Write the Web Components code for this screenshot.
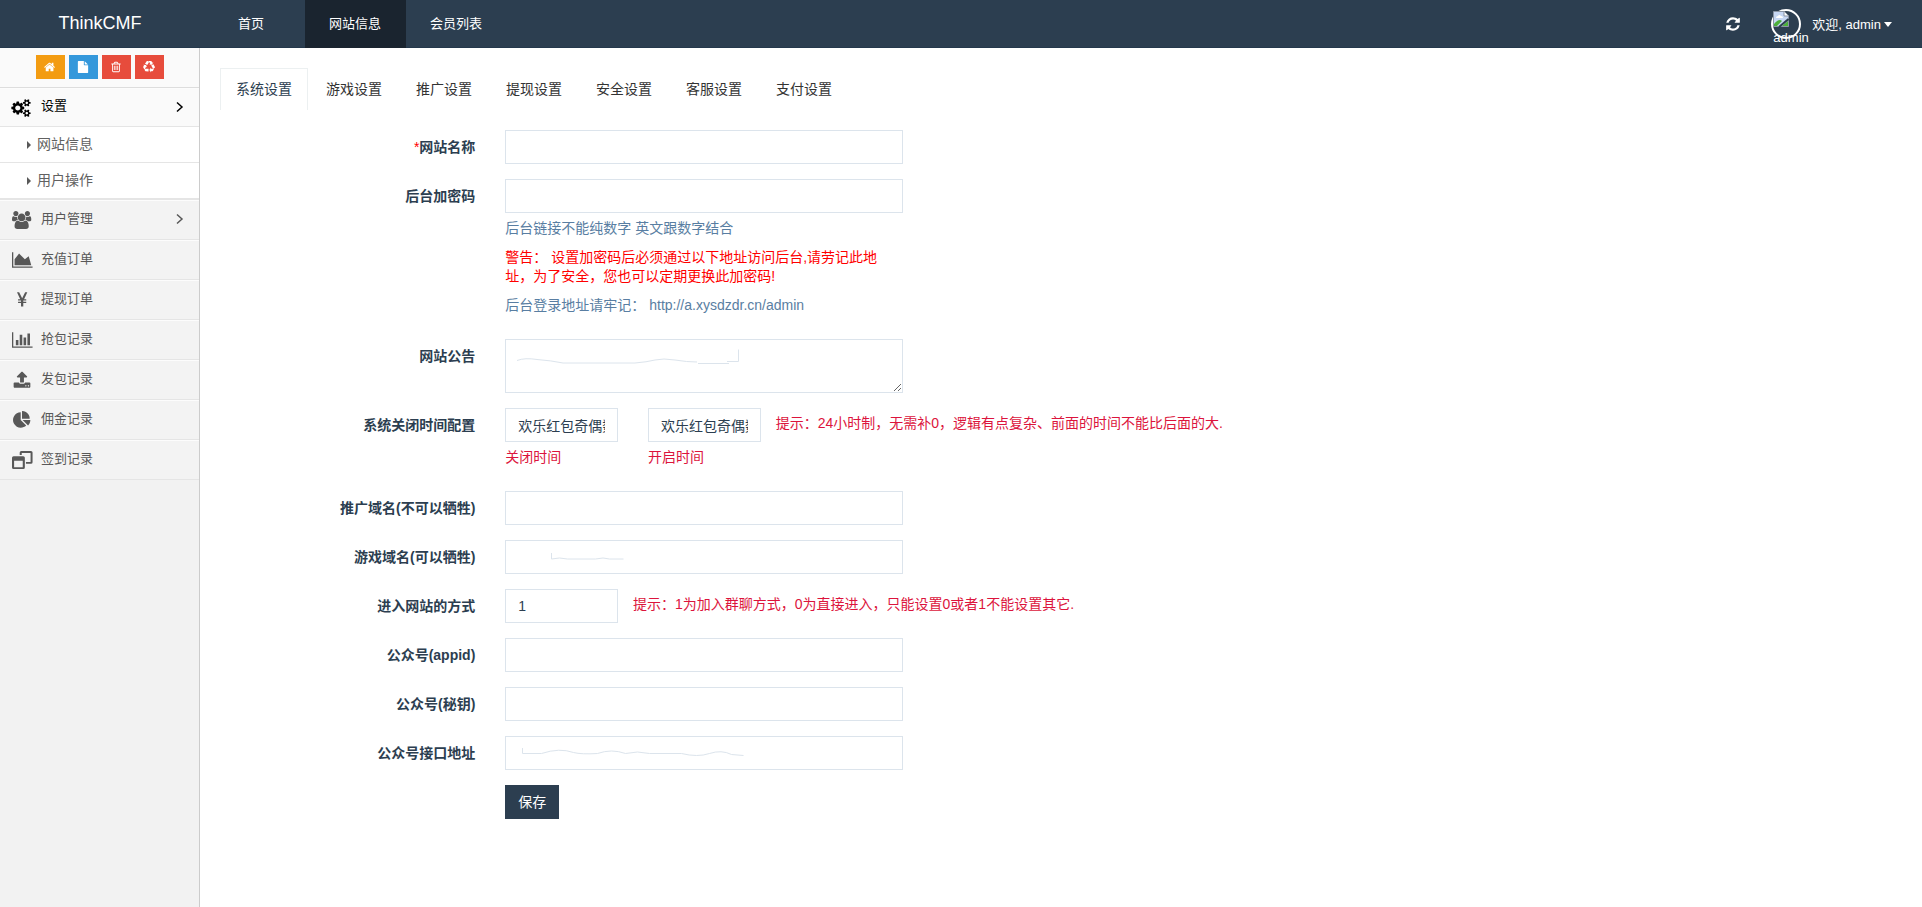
<!DOCTYPE html>
<html lang="zh-CN">
<head>
<meta charset="utf-8">
<meta name="viewport" content="width=device-width, initial-scale=1">
<title>ThinkCMF</title>
<style>
  html { --navy: #2c3e50; --line: #dce4ec; }
  body { margin: 0; background: #fff; color: var(--navy); font: 14px/19px "Liberation Sans", "Noto Sans CJK SC", sans-serif; }
</style>
</head>
<body>
<cmf-app>
  <cmf-header slot="header">
    <cmf-nav-link home>首页</cmf-nav-link>
    <cmf-nav-link active>网站信息</cmf-nav-link>
    <cmf-nav-link>会员列表</cmf-nav-link>
  </cmf-header>
  <cmf-sidebar slot="sidebar">
    <cmf-menu-item icon="cogs" arrow open>设置
      <cmf-submenu-item slot="sub">网站信息</cmf-submenu-item>
      <cmf-submenu-item slot="sub">用户操作</cmf-submenu-item>
    </cmf-menu-item>
    <cmf-menu-item icon="group" arrow>用户管理</cmf-menu-item>
    <cmf-menu-item icon="area">充值订单</cmf-menu-item>
    <cmf-menu-item icon="yen">提现订单</cmf-menu-item>
    <cmf-menu-item icon="bars">抢包记录</cmf-menu-item>
    <cmf-menu-item icon="upload">发包记录</cmf-menu-item>
    <cmf-menu-item icon="pie">佣金记录</cmf-menu-item>
    <cmf-menu-item icon="windows">签到记录</cmf-menu-item>
  </cmf-sidebar>
  <cmf-tabs>
    <cmf-tab active>系统设置</cmf-tab>
    <cmf-tab>游戏设置</cmf-tab>
    <cmf-tab>推广设置</cmf-tab>
    <cmf-tab>提现设置</cmf-tab>
    <cmf-tab>安全设置</cmf-tab>
    <cmf-tab>客服设置</cmf-tab>
    <cmf-tab>支付设置</cmf-tab>
  </cmf-tabs>
  <cmf-form>
    <cmf-field label="网站名称" required></cmf-field>
    <cmf-field label="后台加密码">
      <cmf-help slot="help">后台链接不能纯数字 英文跟数字结合</cmf-help>
      <cmf-help slot="help" tone="red">警告： 设置加密码后必须通过以下地址访问后台,请劳记此地址，为了安全，您也可以定期更换此加密码!</cmf-help>
      <cmf-help slot="help">后台登录地址请牢记： http://a.xysdzdr.cn/admin</cmf-help>
    </cmf-field>
    <cmf-field label="网站公告" multiline>
      <cmf-scribble slot="mark" line="M12 21.5q8-3 20-1q14 1 26 3.500h72q12-1 20-3t20 0t22 2M193 24.500h31M222 22.500h11.500v-12"></cmf-scribble>
    </cmf-field>
    <cmf-time-field label="系统关闭时间配置" value="欢乐红包奇偶数">提示：24小时制，无需补0，逻辑有点复杂、前面的时间不能比后面的大.</cmf-time-field>
    <cmf-field label="推广域名(不可以牺牲)"></cmf-field>
    <cmf-field label="游戏域名(可以牺牲)">
      <cmf-scribble slot="mark" line="M46.500 13v6q8-2 16 0h28q8-2 14 0h14"></cmf-scribble>
    </cmf-field>
    <cmf-field label="进入网站的方式" value="1" narrow>
      <span slot="tip">提示：1为加入群聊方式，0为直接进入，只能设置0或者1不能设置其它.</span>
    </cmf-field>
    <cmf-field label="公众号(appid)"></cmf-field>
    <cmf-field label="公众号(秘钥)"></cmf-field>
    <cmf-field label="公众号接口地址">
      <cmf-scribble slot="mark" line="M17.500 12v5.500h19q18-6 32-1q8 2 24 1q14-5 28 0q12-3 24 0h32q16 4 28 0q12-4 22 1l12 1"></cmf-scribble>
    </cmf-field>
    <cmf-actions></cmf-actions>
  </cmf-form>
</cmf-app>

<script>
const ICONS = {
  home: [1792, 'M1408 992v480q0 26-19 45t-45 19h-384v-384h-256v384h-384q-26 0-45-19t-19-45v-480q0-1 .5-3t.5-3l575-474 575 474q1 2 1 6zm223-69l-62 74q-8 9-21 11h-3q-13 0-21-7l-692-577-692 577q-12 8-24 7-13-2-21-11l-62-74q-8-10-7-23.5t11-21.5l719-599q32-26 76-26t76 26l244 204v-195q0-14 9-23t23-9h192q14 0 23 9t9 23v408l219 182q10 8 11 21.5t-7 23.5z'],
  file: [1792, 'M1152 512v-472q22 14 36 28l408 408q14 14 28 36h-472zm-128 32q0 40 28 68t68 28h544v1056q0 40-28 68t-68 28h-1344q-40 0-68-28t-28-68v-1600q0-40 28-68t68-28h800v544z'],
  trash: [1792, 'M704 736v576q0 14-9 23t-23 9h-64q-14 0-23-9t-9-23v-576q0-14 9-23t23-9h64q14 0 23 9t9 23zm256 0v576q0 14-9 23t-23 9h-64q-14 0-23-9t-9-23v-576q0-14 9-23t23-9h64q14 0 23 9t9 23zm256 0v576q0 14-9 23t-23 9h-64q-14 0-23-9t-9-23v-576q0-14 9-23t23-9h64q14 0 23 9t9 23zm128 724v-948h-896v948q0 22 7 40.5t14.5 27 10.5 8.5h832q3 0 10.5-8.5t14.5-27 7-40.5zm-672-1076h448l-48-117q-7-9-17-11h-317q-10 2-17 11zm928 32v64q0 14-9 23t-23 9h-96v948q0 83-47 143.5t-113 60.5h-832q-66 0-113-58.5t-47-141.5v-952h-96q-14 0-23-9t-9-23v-64q0-14 9-23t23-9h309l70-167q15-37 54-63t79-26h320q40 0 79 26t54 63l70 167h309q14 0 23 9t9 23z'],
  recycle: [1792, 'M836 1169l-15 368-2 22-420-29q-36-3-67-31.5t-47-65.5q-11-27-14.5-55t4-65 12-55 21.5-64 19-53q78 12 509 28zm-387-586l180 379-147-92q-63 72-111.5 144.5t-72.5 125-39.5 94.5-18.5 63l-4 21-190-357q-17-26-18-56t6-47l8-18q35-63 114-188l-140-86zm1231 517l-188 359q-12 29-36.5 46.5t-43.5 20.5l-18 4q-71 7-219 12l8 164-230-367 211-362 7 173q170 16 283 5t170-33zm-785-924q-47 63-265 435l-317-187-19-12 225-356q20-31 60-45t80-10q24 2 48.5 12t42 21 41.5 33 36 34.5 36 39.5 32 35zm655 307l212 363q18 37 12.5 76t-27.5 74q-13 20-33 37t-38 28-48.5 22-47 16-51.5 14-46 12q-34-72-265-436l313-195zm-143-226l142-83-220 373-419-20 151-86q-34-89-75-166t-75.5-123.5-64.5-80-47-46.5l-17-13 405 1q31-3 58 10.5t39 28.5l11 15q39 61 112 190z'],
  refresh: [1792, 'M1639 1056q0 5-1 7-64 268-268 434.5t-478 166.5q-146 0-282.5-55t-243.5-157l-129 129q-19 19-45 19t-45-19-19-45v-448q0-26 19-45t45-19h448q26 0 45 19t19 45-19 45l-137 137q71 66 161 102t187 36q134 0 250-65t186-179q11-17 53-117 8-23 30-23h192q13 0 22.5 9.5t9.5 22.5zm25-800v448q0 26-19 45t-45 19h-448q-26 0-45-19t-19-45 19-45l138-138q-148-137-349-137-134 0-250 65t-186 179q-11 17-53 117-8 23-30 23h-199q-13 0-22.5-9.5t-9.5-22.5v-7q65-268 270-434.5t480-166.5q146 0 284 55.5t245 156.5l130-129q19-19 45-19t45 19 19 45z'],
  cogs: [1920, 'M832 896q0-106-75-181t-181-75-181 75-75 181 75 181 181 75 181-75 75-181zm768 512q0-52-38-90t-90-38-90 38-38 90q0 53 37.5 90.5t90.5 37.5 90.5-37.5 37.5-90.5zm0-1024q0-52-38-90t-90-38-90 38-38 90q0 53 37.5 90.5t90.5 37.5 90.5-37.5 37.5-90.5zm-384 421v185q0 10-7 19.5t-16 10.5l-155 24q-11 35-32 76 34 48 90 115 7 11 7 20 0 12-7 19-23 30-82.5 89.5t-78.5 59.5q-11 0-21-7l-115-90q-37 19-77 31-11 108-23 155-7 24-30 24h-186q-11 0-20-7.5t-10-17.5l-23-153q-34-10-75-31l-118 89q-7 7-20 7-11 0-21-8-144-133-144-160 0-9 7-19 10-14 41-53t47-61q-23-44-35-82l-152-24q-10-1-17-9.5t-7-19.5v-185q0-10 7-19.5t16-10.5l155-24q11-35 32-76-34-48-90-115-7-11-7-20 0-12 7-20 22-30 82-89t79-59q11 0 21 7l115 90q34-18 77-32 11-108 23-154 7-24 30-24h186q11 0 20 7.5t10 17.5l23 153q34 10 75 31l118-89q8-7 20-7 11 0 21 8 144 133 144 160 0 8-7 19-12 16-42 54t-45 60q23 48 34 82l152 23q10 2 17 10.5t7 19.5zm640 533v140q0 16-149 31-12 27-30 52 51 113 51 138 0 4-4 7-122 71-124 71-8 0-46-47t-52-68q-20 2-30 2t-30-2q-14 21-52 68t-46 47q-2 0-124-71-4-3-4-7 0-25 51-138-18-25-30-52-149-15-149-31v-140q0-16 149-31 13-29 30-52-51-113-51-138 0-4 4-7 4-2 35-20t59-34 30-16q8 0 46 46.5t52 67.5q20-2 30-2t30 2q51-71 92-112l6-2q4 0 124 70 4 3 4 7 0 25-51 138 17 23 30 52 149 15 149 31zm0-1024v140q0 16-149 31-12 27-30 52 51 113 51 138 0 4-4 7-122 71-124 71-8 0-46-47t-52-68q-20 2-30 2t-30-2q-14 21-52 68t-46 47q-2 0-124-71-4-3-4-7 0-25 51-138-18-25-30-52-149-15-149-31v-140q0-16 149-31 13-29 30-52-51-113-51-138 0-4 4-7 4-2 35-20t59-34 30-16q8 0 46 46.5t52 67.5q20-2 30-2t30 2q51-71 92-112l6-2q4 0 124 70 4 3 4 7 0 25-51 138 17 23 30 52 149 15 149 31z'],
  group: [1920, 'M593 896q-162 5-265 128h-134q-82 0-138-40.5t-56-118.5q0-353 124-353 6 0 43.5 21t97.5 42.5 119 21.5q67 0 133-23-5 37-5 66 0 139 81 256zm1071 637q0 120-73 189.5t-194 69.5h-874q-121 0-194-69.5t-73-189.5q0-53 3.5-103.5t14-109 26.5-108.5 43-97.5 62-81 85.5-53.5 111.5-20q10 0 43 21.5t73 48 107 48 135 21.5 135-21.5 107-48 73-48 43-21.5q61 0 111.5 20t85.5 53.5 62 81 43 97.5 26.5 108.5 14 109 3.5 103.5zm-1024-1277q0 106-75 181t-181 75-181-75-75-181 75-181 181-75 181 75 75 181zm704 384q0 159-112.5 271.5t-271.5 112.5-271.5-112.5-112.5-271.5 112.5-271.5 271.5-112.5 271.5 112.5 112.5 271.5zm576 225q0 78-56 118.5t-138 40.5h-134q-103-123-265-128 81-117 81-256 0-29-5-66 66 23 133 23 59 0 119-21.5t97.5-42.5 43.5-21q124 0 124 353zm-128-609q0 106-75 181t-181 75-181-75-75-181 75-181 181-75 181 75 75 181z'],
  area: [2048, 'M2048 1536v128h-2048v-1536h128v1408h1920zm-384-1024l256 896h-1664v-576l448-576 576 576z'],
  bars: [2048, 'M640 896v512h-256v-512h256zm384-512v1024h-256v-1024h256zm1024 1152v128h-2048v-1536h128v1408h1920zm-640-896v768h-256v-768h256zm384-384v1152h-256v-1152h256z'],
  yen: [1027, 'M400 1536V1200H105V1060H400V950H105V810H320L0 128H215L513 730 811 128H1027L705 810H920V950H625V1060H920V1200H625V1536Z'],
  upload: [1792, 'M1344 1472q0-26-19-45t-45-19-45 19-19 45 19 45 45 19 45-19 19-45zm256 0q0-26-19-45t-45-19-45 19-19 45 19 45 45 19 45-19 19-45zm128-224v320q0 40-28 68t-68 28h-1472q-40 0-68-28t-28-68v-320q0-40 28-68t68-28h427q21 56 70.5 92t110.5 36h256q61 0 110.5-36t70.5-92h427q40 0 68 28t28 68zm-325-648q-17 40-59 40h-256v448q0 26-19 45t-45 19h-256q-26 0-45-19t-19-45v-448h-256q-42 0-59-40-17-39 14-69l448-448q18-19 45-19t45 19l448 448q31 30 14 69z'],
  pie: [1792, 'M768 890l546 546q-106 108-247.5 168t-298.5 60q-209 0-385.5-103t-279.5-279.5-103-385.5 103-385.5 279.5-279.5 385.5-103v762zm187 6h773q0 157-60 298.5t-168 247.5zm709-128h-768v-768q209 0 385.5 103t279.5 279.5 103 385.5z'],
  windows: [2048, 'M0 672Q0 512 160 512H1120Q1280 512 1280 672V1632Q1280 1792 1120 1792H160Q0 1792 0 1632ZM210 960V1610H1070V960ZM768 400V160Q768 0 928 0H1888Q2048 0 2048 160V1120Q2048 1280 1888 1280H1390V1090H1850V190H970V400Z']
};

/* Registers an element whose shadow root is filled from view(host). */
function define(name, view) {
  customElements.define(name, class extends HTMLElement {
    connectedCallback() {
      if (this.shadowRoot) return;
      const tpl = document.createElement('template');
      tpl.innerHTML = '<style>*{box-sizing:border-box}:host{box-sizing:border-box}</style>' + view(this);
      this.attachShadow({ mode: 'open' }).append(tpl.content.cloneNode(true));
    }
  });
}

define('cmf-icon', el => {
  const [w, d] = ICONS[el.getAttribute('name')];
  return `<style>
    :host { display: inline-flex; --size: 14px; }
    svg { height: var(--size); display: block; fill: currentColor; fill-rule: ${el.getAttribute('name') === 'windows' ? 'evenodd' : 'nonzero'}; overflow: visible; }
  </style><svg viewBox="0 0 ${w} 1792" aria-hidden="true"><path d="${d}"/></svg>`;
});

define('cmf-app', () => `<style>
    :host { display: grid; grid-template: 48px 1fr / 200px minmax(0, 1fr); min-height: 100vh; }
    header { grid-column: 1 / 3; display: grid; }
    aside { display: grid; }
    main { padding: 20px; }
  </style>
  <header><slot name="header"></slot></header>
  <aside><slot name="sidebar"></slot></aside>
  <main><slot></slot></main>`);

define('cmf-header', () => `<style>
    :host { display: flex; background: var(--navy); border-bottom: 1px solid #24384c; color: #fff; font-size: 13px; }
    a { color: inherit; text-decoration: none; }
    .brand { width: 200px; font-size: 18px; line-height: 47px; text-align: center; }
    nav { display: flex; padding-left: 13px; }
    .user { margin-left: auto; display: flex; align-items: center; padding-right: 30px; }
    .refresh { padding: 0; border: 0; background: none; color: inherit; display: flex; margin-right: 30px; }
    cmf-icon { --size: 16px; }
    .avatar { position: relative; width: 30px; height: 30px; border: 2px solid #fff; border-radius: 50%; margin-right: 11px; }
    .avatar svg { position: absolute; left: 0; top: 0; }
    .avatar span { position: absolute; left: 0; top: 17px; line-height: 19px; }
    .menu { display: flex; align-items: center; gap: 3px; padding-top: 2px; }
    .caret { border: 4px solid transparent; border-top: 5px solid #fff; border-bottom: 0; }
  </style>
  <a class="brand" href="#">ThinkCMF</a>
  <nav><slot></slot></nav>
  <div class="user">
    <button class="refresh" type="button" aria-label="refresh"><cmf-icon name="refresh"></cmf-icon></button>
    <div class="avatar">
      <svg width="16" height="16" viewBox="0 0 16 16" aria-hidden="true">
        <path d="M.5.5H11l4.500 4.500V15.500H.5Z" fill="#c6d7f4" stroke="#8b95a5"/>
        <path d="M11 .5V5h4.500" fill="#fff" stroke="#8b95a5"/>
        <path d="M3 7q0-2 2-2 1-2 3 0 2 0 2 2Z" fill="#fff"/>
        <path d="M1 15V13q5-6 8-3l-5 5Z" fill="#4caf3a"/>
        <path d="M9 15l6-5v5Z" fill="#4caf3a"/>
        <path d="M6 16l9.500-8" stroke="#2c3e50" stroke-width="2"/>
      </svg>
      <span>admin</span>
    </div>
    <a class="menu" href="#">欢迎, admin<i class="caret"></i></a>
  </div>`);

define('cmf-nav-link', () => `<style>
    :host { display: flex; }
    :host([home]) { margin-right: 17px; }
    :host([active]) { background: #1a242f; margin-bottom: -1px; }
    a { display: block; padding: 0 25px 0 24px; line-height: 47px; color: #fff; text-decoration: none; white-space: nowrap; }
    :host([home]) a { padding-left: 25px; padding-right: 24px; }
  </style><a href="#"><slot></slot></a>`);

define('cmf-sidebar', () => `<style>
    :host { display: block; background: #f2f2f2; border-right: 1px solid #ccc; font-size: 13px; }
    .tools { display: flex; justify-content: center; gap: 4px; padding: 7px 0 8px; background: #fafafa; border-bottom: 1px solid #ddd; }
    button { width: 29px; height: 24px; padding: 0; border: 0; color: #fff; display: flex; align-items: center; justify-content: center; }
    cmf-icon { --size: 12px; }
    .home { background: #f39c12; } .file { background: #3498db; } .del { background: #e74c3c; }
    nav { display: block; }
  </style>
  <div class="tools">
    <button type="button" class="home" aria-label="home"><cmf-icon name="home"></cmf-icon></button>
    <button type="button" class="file" aria-label="file"><cmf-icon name="file"></cmf-icon></button>
    <button type="button" class="del" aria-label="trash"><cmf-icon name="trash"></cmf-icon></button>
    <button type="button" class="del" aria-label="recycle"><cmf-icon name="recycle"></cmf-icon></button>
  </div>
  <nav><slot></slot></nav>`);

define('cmf-menu-item', el => `<style>
    :host { display: block; color: #585858; }
    a { display: flex; align-items: center; height: 40px; padding: 0 15px 2px 11px; background: #f3f3f3;
        border-top: 1px solid #fcfcfc; border-bottom: 1px solid #e5e5e5; color: inherit; text-decoration: none; }
    :host([open]) a { height: 39px; background: #fafafa; color: #000; }
    .ico { width: 22px; display: flex; justify-content: center; padding-top: 2px; margin-right: 8px; }
    cmf-icon { --size: 18px; }
    .text { flex: 1; padding-bottom: 2px; }
    .sub { border-bottom: 1px solid #e5e5e5; }
    .arrow { display: block; fill: none; stroke: currentColor; stroke-width: 1.5; }
  </style>
  <a href="#"><span class="ico"><cmf-icon name="${el.getAttribute('icon')}"></cmf-icon></span><span class="text"><slot></slot></span>
  ${el.hasAttribute('arrow') ? '<svg class="arrow" width="8" height="12" viewBox="0 0 8 12" aria-hidden="true"><path d="M1 1.500L6 6 1 10.500"/></svg>' : ''}</a>
  ${el.hasAttribute('open') ? '<div class="sub"><slot name="sub"></slot></div>' : ''}`);

define('cmf-submenu-item', () => `<style>
    :host { display: block; background: #fff; font-size: 14px; color: #616161; border-bottom: 1px solid #e5e5e5; }
    a { display: flex; align-items: center; gap: 6px; height: 35px; padding-left: 27px; color: inherit; text-decoration: none; }
    i { border: 4px solid transparent; border-left-color: #585858; border-right: 0; }
  </style><a href="#"><i></i><slot></slot></a>`);

define('cmf-tabs', () => `<style>
    :host { display: flex; gap: 2px; margin-bottom: 20px; }
  </style><slot></slot>`);

define('cmf-tab', () => `<style>
    :host { display: block; border: 1px solid transparent; border-bottom: 0; }
    :host([active]) { border-color: #ecf0f1; }
    a { display: block; padding: 11px 15px; color: var(--navy); text-decoration: none; }
    :host(:not([active])) a { color: #333; }
  </style><a href="#"><slot></slot></a>`);

define('cmf-form', () => `<style>
    :host { display: block; margin: 0 -15px; }
    form { display: grid; gap: 15px; margin: 0; }
  </style><form onsubmit="return false"><slot></slot></form>`);

/* Twelve-column row shared by every kind of field. */
const ROW = `
  :host { display: grid; grid-template-columns: repeat(12, minmax(0, 1fr)); align-items: start; }
  label.name { grid-column: span 2; padding: 8px 15px 0; text-align: right; font-weight: bold; }
  .control { grid-column: span 3; padding: 0 15px; position: relative; }
  .narrow { grid-column: span 1; }
  input, textarea { display: block; width: 100%; height: 34px; margin: 0; padding: 6px 12px; border: 1px solid var(--line);
    border-radius: 0; background: #fff; color: var(--navy); font: inherit; outline: 0; }
  textarea { height: 54px; resize: vertical; }
  .tip { grid-column: span 7; padding-top: 6px; color: crimson; }
`;

define('cmf-field', el => `<style>${ROW}
    i { color: red; font-style: normal; font-weight: normal; }
  </style>
  <label class="name" for="f">${el.hasAttribute('required') ? '<i>*</i>' : ''}${el.getAttribute('label')}</label>
  <div class="control ${el.hasAttribute('narrow') ? 'narrow' : ''}">
    ${el.hasAttribute('multiline') ? '<textarea id="f"></textarea>' : `<input id="f" type="text" value="${el.getAttribute('value') || ''}">`}
    <slot name="mark"></slot><slot name="help"></slot>
  </div>
  <div class="tip"><slot name="tip"></slot></div>`);

define('cmf-time-field', el => `<style>${ROW}</style>
  <label class="name" for="close">${el.getAttribute('label')}</label>
  <div class="control narrow"><input id="close" type="text" value="${el.getAttribute('value')}"><cmf-help tone="crimson"><label for="close">关闭时间</label></cmf-help></div>
  <div class="control narrow"><input id="open" type="text" value="${el.getAttribute('value')}"><cmf-help tone="crimson"><label for="open">开启时间</label></cmf-help></div>
  <div class="tip"><slot></slot></div>`);

define('cmf-help', () => `<style>
    :host { display: block; margin: 6px 0 9px; color: #597ea2; }
    :host(:not(:first-of-type)) { margin-top: 10px; }
    :host([tone=red]) { color: red; margin-bottom: 10px; }
    :host([tone=crimson]) { color: crimson; margin-top: 6px; }
  </style><slot></slot>`);

define('cmf-scribble', el => `<style>
    :host { position: absolute; left: 15px; top: 0; pointer-events: none; }
    svg { display: block; fill: none; stroke: var(--line); }
  </style><svg width="240" height="34" aria-hidden="true"><path d="${el.getAttribute('line')}"/></svg>`);

define('cmf-actions', () => `<style>${ROW}
    .control { grid-column: 3 / span 3; }
    button { height: 34px; padding: 0 13px; border: 0; background: var(--navy); color: #fff; font: inherit; }
  </style><div class="control"><button type="submit">保存</button></div>`);
</script>
</body>
</html>
